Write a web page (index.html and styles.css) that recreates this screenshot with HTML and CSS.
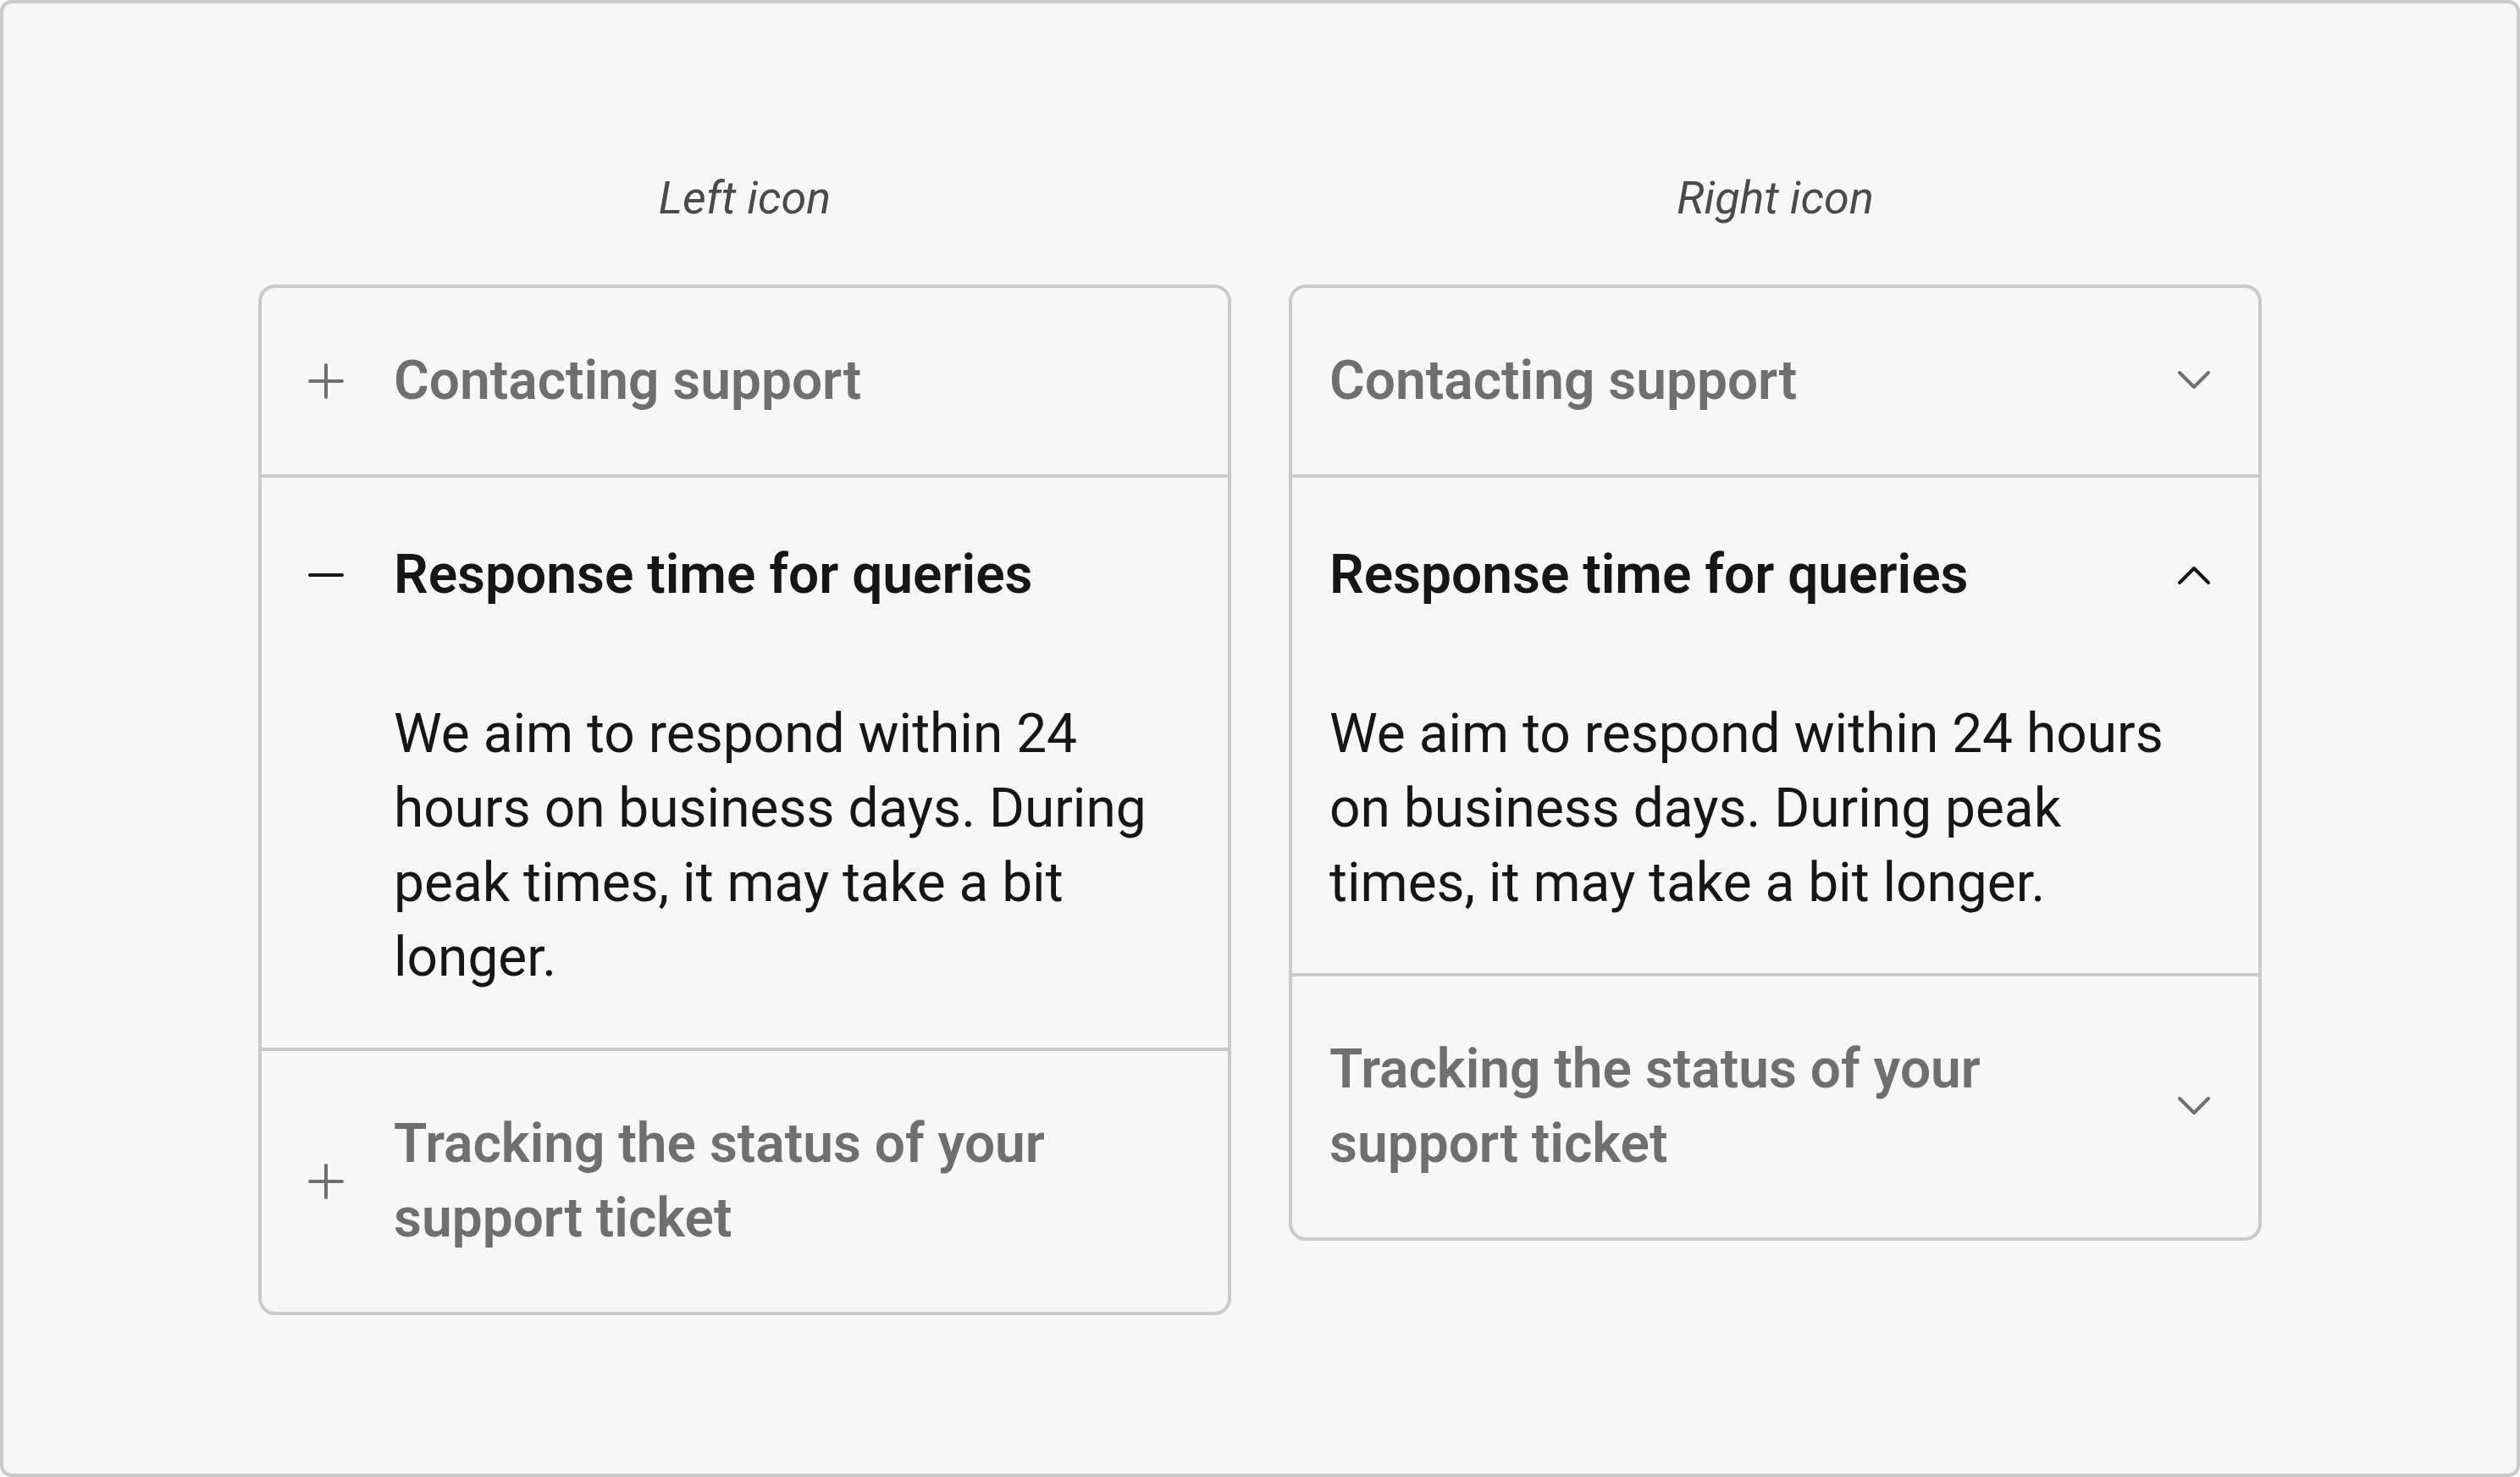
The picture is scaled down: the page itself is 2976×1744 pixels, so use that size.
FILE: index.html
```html
<!DOCTYPE html>
<html lang="en">
<head>
<meta charset="utf-8">
<title>Accordion icon placement</title>
<link rel="stylesheet" href="styles.css">
</head>
<body>
<div class="frame">
  <div class="columns">
    <section class="column">
      <h2 class="label">Left icon</h2>
      <div class="accordion">
        <div class="item">
          <div class="header left">
            <svg class="icon" viewBox="0 0 64 64"><path d="M32 13V51M13 32H51" class="stroke muted"/></svg>
            <span class="title muted-text">Contacting support</span>
          </div>
        </div>
        <div class="item open">
          <div class="header left">
            <svg class="icon" viewBox="0 0 64 64"><path d="M13 32H51" class="stroke dark"/></svg>
            <span class="title">Response time for queries</span>
          </div>
          <div class="body body-left">We aim to respond within 24 hours on business days. During peak times, it may take a bit longer.</div>
        </div>
        <div class="item">
          <div class="header left">
            <svg class="icon" viewBox="0 0 64 64"><path d="M32 13V51M13 32H51" class="stroke muted"/></svg>
            <span class="title muted-text">Tracking the status of your support ticket</span>
          </div>
        </div>
      </div>
    </section>
    <section class="column">
      <h2 class="label">Right icon</h2>
      <div class="accordion">
        <div class="item">
          <div class="header right">
            <span class="title muted-text">Contacting support</span>
            <svg class="icon" viewBox="0 0 64 64"><path d="M15 22L32 39L49 22" class="stroke muted"/></svg>
          </div>
        </div>
        <div class="item open">
          <div class="header right">
            <span class="title">Response time for queries</span>
            <svg class="icon" viewBox="0 0 64 64"><path d="M15 41L32 24L49 41" class="stroke dark"/></svg>
          </div>
          <div class="body body-right">We aim to respond within 24 hours on business days. During peak times, it may take a bit longer.</div>
        </div>
        <div class="item">
          <div class="header right">
            <span class="title muted-text">Tracking the status of your support ticket</span>
            <svg class="icon" viewBox="0 0 64 64"><path d="M15 22L32 39L49 22" class="stroke muted"/></svg>
          </div>
        </div>
      </div>
    </section>
  </div>
</div>
</body>
</html>
```

FILE: styles.css
```css
* {
  box-sizing: border-box;
}

html, body {
  margin: 0;
  padding: 0;
  background: #f7f7f7;
}

body {
  font-family: Roboto, "Liberation Sans", sans-serif;
  color: #161616;
}

.frame {
  width: 100%;
  height: 100vh;
  border: 4px solid #cacaca;
  border-radius: 14px;
  background: #f7f7f7;
  padding-top: 193px;
}

.columns {
  display: flex;
  justify-content: center;
  align-items: flex-start;
  gap: 68px;
}

.column {
  width: 1149px;
  display: flex;
  flex-direction: column;
}

.label {
  margin: 0 0 65px;
  font-size: 54px;
  line-height: 74px;
  font-style: italic;
  font-weight: 400;
  color: #4a4a4a;
  text-align: center;
}

.accordion {
  border: 4px solid #cacaca;
  border-radius: 20px;
  background: #f7f7f7;
}

.item + .item {
  border-top: 4px solid #cacaca;
}

.header {
  display: flex;
  align-items: center;
  gap: 48px;
  padding: 66px 44px;
}

.icon {
  width: 64px;
  height: 64px;
  flex: 0 0 64px;
}

.stroke {
  fill: none;
  stroke-width: 4;
  stroke-linecap: round;
  stroke-linejoin: round;
}

.stroke.muted {
  stroke: #6f6f6f;
}

.stroke.dark {
  stroke: #161616;
}

.title {
  flex: 1 1 auto;
  font-size: 64px;
  line-height: 88px;
  font-weight: 600;
  color: #161616;
}

.title.muted-text {
  color: #6f6f6f;
}

.open .header {
  padding-top: 71px;
  padding-bottom: 0;
}

.body {
  font-size: 64px;
  line-height: 88px;
  font-weight: 400;
  color: #161616;
  padding-top: 100px;
  padding-bottom: 62px;
}

.body-left {
  padding-left: 156px;
  padding-right: 44px;
}

.body-right {
  padding-left: 44px;
  padding-right: 88px;
}
```
